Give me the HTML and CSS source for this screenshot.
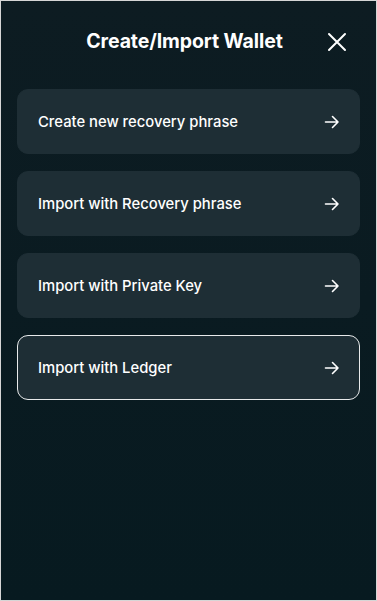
FILE: index.html
```html
<!DOCTYPE html>
<html>
<head>
<meta charset="utf-8">
<link rel="stylesheet" href="styles.css">
</head>
<body>
<div class="screen">
  <header class="header">
    <h1 class="title">Create/Import Wallet</h1>
    <button class="close" aria-label="Close">
      <svg width="20" height="20" viewBox="0 0 20 20"><path d="M2 2 L18 18 M18 2 L2 18" stroke="#fff" stroke-width="2" stroke-linecap="round" fill="none"/></svg>
    </button>
  </header>
  <div class="options">
    <div class="option"><span>Create new recovery phrase</span><svg class="arrow" width="16" height="14" viewBox="0 0 16 14"><path d="M1.5 7 H14 M8.5 1.5 L14 7 L8.5 12.5" stroke="#fff" stroke-width="1.6" stroke-linecap="round" stroke-linejoin="round" fill="none"/></svg></div>
    <div class="option"><span>Import with Recovery phrase</span><svg class="arrow" width="16" height="14" viewBox="0 0 16 14"><path d="M1.5 7 H14 M8.5 1.5 L14 7 L8.5 12.5" stroke="#fff" stroke-width="1.6" stroke-linecap="round" stroke-linejoin="round" fill="none"/></svg></div>
    <div class="option"><span>Import with Private Key</span><svg class="arrow" width="16" height="14" viewBox="0 0 16 14"><path d="M1.5 7 H14 M8.5 1.5 L14 7 L8.5 12.5" stroke="#fff" stroke-width="1.6" stroke-linecap="round" stroke-linejoin="round" fill="none"/></svg></div>
    <div class="option selected"><span>Import with Ledger</span><svg class="arrow" width="16" height="14" viewBox="0 0 16 14"><path d="M1.5 7 H14 M8.5 1.5 L14 7 L8.5 12.5" stroke="#fff" stroke-width="1.6" stroke-linecap="round" stroke-linejoin="round" fill="none"/></svg></div>
  </div>
</div>
</body>
</html>
```
FILE: styles.css
```css
html, body { margin: 0; padding: 0; }
body { background: #0b1b21; }
.screen {
  box-sizing: border-box;
  width: 377px;
  height: 601px;
  border: 1px solid #d6d6d6;
  background: linear-gradient(#0d1c22, #071a20);
  font-family: Inter, "Noto Sans", sans-serif;
  color: #fff;
  padding: 0 16px;
}
.header {
  height: 88px;
  display: flex;
  align-items: center;
  justify-content: center;
  position: relative;
}
.title {
  margin: 0 8px 0 0;
  font-size: 19.5px;
  font-weight: 700;
  letter-spacing: -0.1px;
  transform: translateY(-4px);
}
.close {
  position: absolute;
  right: 13px;
  top: 31px;
  background: none;
  border: 0;
  padding: 0;
  width: 20px;
  height: 20px;
  cursor: pointer;
}
.close svg { display: block; }
.options {
  display: flex;
  flex-direction: column;
  gap: 17px;
}
.option {
  box-sizing: border-box;
  height: 65px;
  border-radius: 11px;
  background: #1e2e35;
  border: 1px solid #1e2e35;
  display: flex;
  align-items: center;
  justify-content: space-between;
  padding: 0 19px 0 20px;
  font-size: 14.8px;
  font-weight: 500;
}
.option.selected { border-color: #e8eaeb; }
.arrow { display: block; }
```
